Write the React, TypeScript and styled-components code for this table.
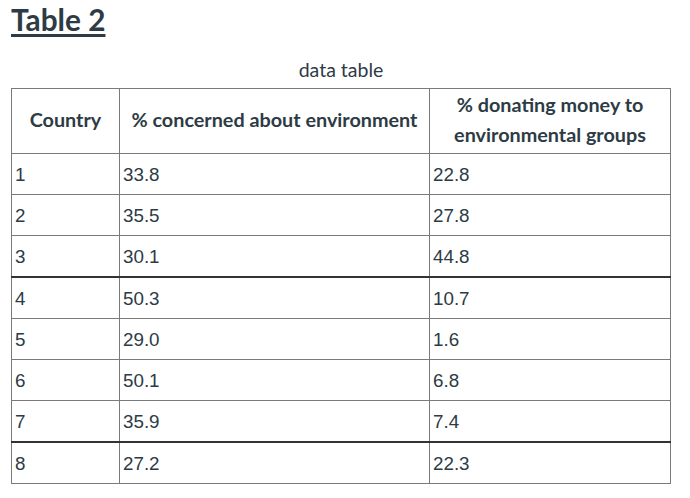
import React from 'react'
import styled, { createGlobalStyle } from 'styled-components'

const GlobalStyle = createGlobalStyle`
  body {
    margin: 0;
    background: #ffffff;
    color: #2d3b45;
    font-family: Lato, "Open Sans", sans-serif;
  }
`

const Page = styled.main`
  padding: 1px 11px 0 11px;
  width: 659px;
`

const Title = styled.h2`
  margin: 0;
  font-size: 29.8px;
  font-weight: 700;
  line-height: 38px;
  text-decoration: underline;
  text-decoration-thickness: 3px;
  text-underline-offset: 3px;
`

const DataTable = styled.table`
  margin-top: 19px;
  width: 659px;
  border-collapse: collapse;
  table-layout: fixed;
`

const Caption = styled.caption`
  font-size: 19.5px;
  line-height: 24px;
  padding-bottom: 6px;
  color: #2d3b45;
`

const HeadCell = styled.th`
  border: 1px solid #7a7a7a;
  height: 60px;
  padding: 0 4px 4px 4px;
  font-size: 19.8px;
  font-weight: 700;
  line-height: 30px;
  text-align: center;
  vertical-align: middle;
`

const Row = styled.tr<{ $groupStart?: boolean }>`
  border-top: ${(props) => (props.$groupStart ? '2px solid #333333' : '1px solid #7a7a7a')};
`

const Cell = styled.td`
  border-left: 1px solid #7a7a7a;
  border-right: 1px solid #7a7a7a;
  border-bottom: 1px solid #7a7a7a;
  height: 39px;
  padding: 1px 3px 0 3px;
  font-family: "Liberation Sans", Arial, sans-serif;
  font-size: 18.8px;
  color: #2d3b45;
  vertical-align: middle;
`

const rows = [
  { country: '1', concerned: '33.8', donating: '22.8' },
  { country: '2', concerned: '35.5', donating: '27.8' },
  { country: '3', concerned: '30.1', donating: '44.8' },
  { country: '4', concerned: '50.3', donating: '10.7', groupStart: true },
  { country: '5', concerned: '29.0', donating: '1.6' },
  { country: '6', concerned: '50.1', donating: '6.8' },
  { country: '7', concerned: '35.9', donating: '7.4' },
  { country: '8', concerned: '27.2', donating: '22.3', groupStart: true },
]

export default function App() {
  return (
    <>
      <GlobalStyle />
      <Page>
        <Title>Table 2</Title>
        <DataTable>
          <Caption>data table</Caption>
          <colgroup>
            <col style={{ width: '108px' }} />
            <col style={{ width: '310px' }} />
            <col style={{ width: '241px' }} />
          </colgroup>
          <thead>
            <tr>
              <HeadCell>Country</HeadCell>
              <HeadCell>% concerned about environment</HeadCell>
              <HeadCell>
                % donating money to
                <br />
                environmental groups
              </HeadCell>
            </tr>
          </thead>
          <tbody>
            {rows.map((row) => (
              <Row key={row.country} $groupStart={row.groupStart}>
                <Cell>{row.country}</Cell>
                <Cell>{row.concerned}</Cell>
                <Cell>{row.donating}</Cell>
              </Row>
            ))}
          </tbody>
        </DataTable>
      </Page>
    </>
  )
}
